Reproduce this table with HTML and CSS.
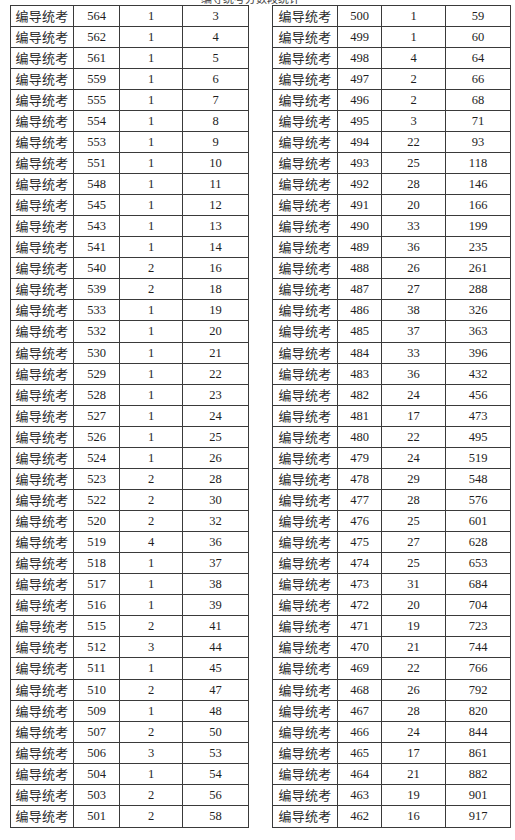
FILE: index.html
```html
<!DOCTYPE html>
<html lang="zh">
<head>
<meta charset="utf-8">
<title>编导统考</title>
<link rel="stylesheet" href="styles.css">
</head>
<body>
<div class="title"><span>编导统考分数段统计</span></div>
<div class="tables">
<table class="t left">
<colgroup><col class="c1"><col class="c2"><col class="c3"><col class="c4"></colgroup>
<tbody>
<tr><td class="k">编导统考</td><td>564</td><td>1</td><td>3</td></tr>
<tr><td class="k">编导统考</td><td>562</td><td>1</td><td>4</td></tr>
<tr><td class="k">编导统考</td><td>561</td><td>1</td><td>5</td></tr>
<tr><td class="k">编导统考</td><td>559</td><td>1</td><td>6</td></tr>
<tr><td class="k">编导统考</td><td>555</td><td>1</td><td>7</td></tr>
<tr><td class="k">编导统考</td><td>554</td><td>1</td><td>8</td></tr>
<tr><td class="k">编导统考</td><td>553</td><td>1</td><td>9</td></tr>
<tr><td class="k">编导统考</td><td>551</td><td>1</td><td>10</td></tr>
<tr><td class="k">编导统考</td><td>548</td><td>1</td><td>11</td></tr>
<tr><td class="k">编导统考</td><td>545</td><td>1</td><td>12</td></tr>
<tr><td class="k">编导统考</td><td>543</td><td>1</td><td>13</td></tr>
<tr><td class="k">编导统考</td><td>541</td><td>1</td><td>14</td></tr>
<tr><td class="k">编导统考</td><td>540</td><td>2</td><td>16</td></tr>
<tr><td class="k">编导统考</td><td>539</td><td>2</td><td>18</td></tr>
<tr><td class="k">编导统考</td><td>533</td><td>1</td><td>19</td></tr>
<tr><td class="k">编导统考</td><td>532</td><td>1</td><td>20</td></tr>
<tr><td class="k">编导统考</td><td>530</td><td>1</td><td>21</td></tr>
<tr><td class="k">编导统考</td><td>529</td><td>1</td><td>22</td></tr>
<tr><td class="k">编导统考</td><td>528</td><td>1</td><td>23</td></tr>
<tr><td class="k">编导统考</td><td>527</td><td>1</td><td>24</td></tr>
<tr><td class="k">编导统考</td><td>526</td><td>1</td><td>25</td></tr>
<tr><td class="k">编导统考</td><td>524</td><td>1</td><td>26</td></tr>
<tr><td class="k">编导统考</td><td>523</td><td>2</td><td>28</td></tr>
<tr><td class="k">编导统考</td><td>522</td><td>2</td><td>30</td></tr>
<tr><td class="k">编导统考</td><td>520</td><td>2</td><td>32</td></tr>
<tr><td class="k">编导统考</td><td>519</td><td>4</td><td>36</td></tr>
<tr><td class="k">编导统考</td><td>518</td><td>1</td><td>37</td></tr>
<tr><td class="k">编导统考</td><td>517</td><td>1</td><td>38</td></tr>
<tr><td class="k">编导统考</td><td>516</td><td>1</td><td>39</td></tr>
<tr><td class="k">编导统考</td><td>515</td><td>2</td><td>41</td></tr>
<tr><td class="k">编导统考</td><td>512</td><td>3</td><td>44</td></tr>
<tr><td class="k">编导统考</td><td>511</td><td>1</td><td>45</td></tr>
<tr><td class="k">编导统考</td><td>510</td><td>2</td><td>47</td></tr>
<tr><td class="k">编导统考</td><td>509</td><td>1</td><td>48</td></tr>
<tr><td class="k">编导统考</td><td>507</td><td>2</td><td>50</td></tr>
<tr><td class="k">编导统考</td><td>506</td><td>3</td><td>53</td></tr>
<tr><td class="k">编导统考</td><td>504</td><td>1</td><td>54</td></tr>
<tr><td class="k">编导统考</td><td>503</td><td>2</td><td>56</td></tr>
<tr><td class="k">编导统考</td><td>501</td><td>2</td><td>58</td></tr>
</tbody>
</table>
<table class="t right">
<colgroup><col class="d1"><col class="d2"><col class="d3"><col class="d4"></colgroup>
<tbody>
<tr><td class="k">编导统考</td><td>500</td><td>1</td><td>59</td></tr>
<tr><td class="k">编导统考</td><td>499</td><td>1</td><td>60</td></tr>
<tr><td class="k">编导统考</td><td>498</td><td>4</td><td>64</td></tr>
<tr><td class="k">编导统考</td><td>497</td><td>2</td><td>66</td></tr>
<tr><td class="k">编导统考</td><td>496</td><td>2</td><td>68</td></tr>
<tr><td class="k">编导统考</td><td>495</td><td>3</td><td>71</td></tr>
<tr><td class="k">编导统考</td><td>494</td><td>22</td><td>93</td></tr>
<tr><td class="k">编导统考</td><td>493</td><td>25</td><td>118</td></tr>
<tr><td class="k">编导统考</td><td>492</td><td>28</td><td>146</td></tr>
<tr><td class="k">编导统考</td><td>491</td><td>20</td><td>166</td></tr>
<tr><td class="k">编导统考</td><td>490</td><td>33</td><td>199</td></tr>
<tr><td class="k">编导统考</td><td>489</td><td>36</td><td>235</td></tr>
<tr><td class="k">编导统考</td><td>488</td><td>26</td><td>261</td></tr>
<tr><td class="k">编导统考</td><td>487</td><td>27</td><td>288</td></tr>
<tr><td class="k">编导统考</td><td>486</td><td>38</td><td>326</td></tr>
<tr><td class="k">编导统考</td><td>485</td><td>37</td><td>363</td></tr>
<tr><td class="k">编导统考</td><td>484</td><td>33</td><td>396</td></tr>
<tr><td class="k">编导统考</td><td>483</td><td>36</td><td>432</td></tr>
<tr><td class="k">编导统考</td><td>482</td><td>24</td><td>456</td></tr>
<tr><td class="k">编导统考</td><td>481</td><td>17</td><td>473</td></tr>
<tr><td class="k">编导统考</td><td>480</td><td>22</td><td>495</td></tr>
<tr><td class="k">编导统考</td><td>479</td><td>24</td><td>519</td></tr>
<tr><td class="k">编导统考</td><td>478</td><td>29</td><td>548</td></tr>
<tr><td class="k">编导统考</td><td>477</td><td>28</td><td>576</td></tr>
<tr><td class="k">编导统考</td><td>476</td><td>25</td><td>601</td></tr>
<tr><td class="k">编导统考</td><td>475</td><td>27</td><td>628</td></tr>
<tr><td class="k">编导统考</td><td>474</td><td>25</td><td>653</td></tr>
<tr><td class="k">编导统考</td><td>473</td><td>31</td><td>684</td></tr>
<tr><td class="k">编导统考</td><td>472</td><td>20</td><td>704</td></tr>
<tr><td class="k">编导统考</td><td>471</td><td>19</td><td>723</td></tr>
<tr><td class="k">编导统考</td><td>470</td><td>21</td><td>744</td></tr>
<tr><td class="k">编导统考</td><td>469</td><td>22</td><td>766</td></tr>
<tr><td class="k">编导统考</td><td>468</td><td>26</td><td>792</td></tr>
<tr><td class="k">编导统考</td><td>467</td><td>28</td><td>820</td></tr>
<tr><td class="k">编导统考</td><td>466</td><td>24</td><td>844</td></tr>
<tr><td class="k">编导统考</td><td>465</td><td>17</td><td>861</td></tr>
<tr><td class="k">编导统考</td><td>464</td><td>21</td><td>882</td></tr>
<tr><td class="k">编导统考</td><td>463</td><td>19</td><td>901</td></tr>
<tr><td class="k">编导统考</td><td>462</td><td>16</td><td>917</td></tr>
</tbody>
</table>
</div>
</body>
</html>
```
FILE: styles.css
```css
html, body {
  margin: 0;
  padding: 0;
  background: #ffffff;
}
body {
  width: 515px;
  height: 840px;
  overflow: hidden;
  color: #1e1e1e;
  font-family: "Liberation Serif", "Noto Sans CJK SC", serif;
}
.title {
  height: 4px;
  overflow: hidden;
  display: flex;
  align-items: flex-end;
  justify-content: center;
  padding-right: 14px;
}
.title span {
  flex: none;
  display: block;
  font-family: "Noto Sans CJK SC", sans-serif;
  font-size: 11px;
  line-height: 11px;
  height: 11px;
  color: #444;
  white-space: nowrap;
}
.tables {
  display: flex;
  gap: 23px;
  padding-left: 10px;
  padding-top: 0.5px;
}
.t {
  border-collapse: collapse;
  table-layout: fixed;
  height: 823px;
}
.t.left { width: 238px; }
.t.right { width: 238px; }
.c1 { width: 63px; }
.c2 { width: 46px; }
.c3 { width: 63px; }
.c4 { width: 66px; }
.d1 { width: 65px; }
.d2 { width: 44px; }
.d3 { width: 64px; }
.d4 { width: 65px; }
.t td {
  border: 1px solid #3a3a3a;
  padding: 0;
  text-align: center;
  vertical-align: middle;
  font-size: 12.5px;
  line-height: 14px;
  height: 20px;
  white-space: nowrap;
}
.t td.k {
  font-family: "Noto Sans CJK SC", sans-serif;
  font-size: 13px;
  letter-spacing: 0.3px;
  color: #2a2a2a;
}
```
